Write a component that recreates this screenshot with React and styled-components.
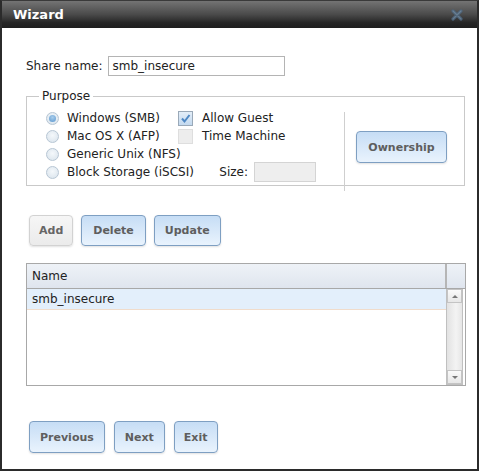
import React from 'react'
import styled, { createGlobalStyle } from 'styled-components'

const Global = createGlobalStyle`
  html, body { margin: 0; padding: 0; background: #fff; }
  body { font-family: "DejaVu Sans", "Liberation Sans", sans-serif; font-size: 12px; color: #222; }
`

const Window = styled.div`
  width: 479px;
  height: 471px;
  box-sizing: border-box;
  border: 2px solid #2b2b2b;
  border-top: 1px solid #3a3a3a;
  background: #fff;
  display: flex;
  flex-direction: column;
`

const TitleBar = styled.div`
  height: 27px;
  flex: none;
  display: flex;
  align-items: center;
  justify-content: space-between;
  padding: 0 14px 0 11px;
  background: linear-gradient(to bottom, #747474 0%, #4a4a4a 50%, #262626 80%, #1e1e1e 100%);
  color: #fff;
  font-weight: bold;
  font-size: 13px;
`

const Close = styled.div`
  width: 12px;
  height: 12px;
  display: flex;
  opacity: 0.8;
`

const Body = styled.div`
  flex: 1;
  padding: 28px 12px 0 24px;
  display: flex;
  flex-direction: column;
`

const ShareRow = styled.div`
  display: flex;
  align-items: center;
  gap: 5px;
`

const TextInput = styled.div`
  box-sizing: border-box;
  width: ${p => p.w}px;
  height: 20px;
  border: 1px solid ${p => (p.disabled ? '#d4d4d4' : '#b4b4b4')};
  background: ${p => (p.disabled ? '#eeeeee' : '#fff')};
  padding: 0 4px;
  display: flex;
  align-items: center;
`

const Fieldset = styled.fieldset`
  margin: 13px 0 0 0;
  padding: 2px 0 0 19px;
  width: 439px;
  box-sizing: border-box;
  height: 97px;
  border: 1px solid #c9c9c9;
  display: flex;
  legend {
    padding: 0 3px;
    margin-left: -7px;
    line-height: 14px;
  }
`

const Options = styled.div`
  display: grid;
  grid-template-columns: 132px 138px;
  grid-auto-rows: 18px;
  align-items: center;
  padding-top: 4px;
  & > :nth-child(n + 7) { height: 22px; }
`

const Radio = styled.label`
  display: flex;
  align-items: center;
  gap: 8px;
  white-space: nowrap;
  color: #222;
  span.dot {
    flex: none;
    box-sizing: border-box;
    width: 13px;
    height: 13px;
    border-radius: 50%;
    border: 1px solid #b7c6d4;
    background: radial-gradient(circle at 50% 40%, #f4f8fb, #d8e2eb);
    display: flex;
    align-items: center;
    justify-content: center;
  }
  span.dot::after {
    content: '';
    display: ${p => (p.checked ? 'block' : 'none')};
    width: 7px;
    height: 7px;
    border-radius: 50%;
    background: radial-gradient(circle at 50% 35%, #a9cdeb, #5a97cf);
  }
`

const Check = styled.label`
  display: flex;
  align-items: center;
  gap: 9px;
  white-space: nowrap;
  span.box {
    flex: none;
    box-sizing: border-box;
    width: 15px;
    height: 15px;
    border: 1px solid ${p => (p.checked ? '#9aa9b8' : '#dedede')};
    background: ${p => (p.checked ? 'linear-gradient(#e4eef8, #c3d9ef)' : '#ededed')};
    display: flex;
    align-items: center;
    justify-content: center;
  }
`

const SizeRow = styled.div`
  display: flex;
  align-items: center;
  justify-content: flex-end;
  gap: 6px;
`

const Separator = styled.div`
  width: 1px;
  background: #cfcfcf;
  margin: 7px 0 0 28px;
  height: 79px;
`

const Side = styled.div`
  flex: 1;
  display: flex;
  align-items: center;
  justify-content: center;
  padding: 0 6px 2px 0;
`

const Button = styled.div`
  box-sizing: border-box;
  height: ${p => p.h || 31}px;
  padding: 0 ${p => p.px || 9}px;
  display: inline-flex;
  align-items: center;
  justify-content: center;
  border-radius: 4px;
  font-weight: bold;
  font-size: 11px;
  color: ${p => (p.disabled ? '#666' : '#5e5e5e')};
  border: 1px solid ${p => (p.disabled ? '#d2d2d2' : '#7e9fc2')};
  background: ${p =>
    p.disabled
      ? 'linear-gradient(to bottom, #f6f6f6, #ebebeb)'
      : 'linear-gradient(to bottom, #c6ddf5, #e9f3fd)'};
  box-shadow: 0 1px 2px rgba(0, 0, 0, 0.12);
`

const ButtonRow = styled.div`
  display: flex;
  gap: ${p => p.gap || 8}px;
  margin: ${p => p.m};
`

const Table = styled.div`
  box-sizing: border-box;
  width: 440px;
  height: 123px;
  margin-top: 17px;
  border: 1px solid #a8a8a8;
  display: flex;
  flex-direction: column;
`

const Header = styled.div`
  height: 24px;
  flex: none;
  display: flex;
  background: linear-gradient(to bottom, #eef2f7, #dfe5ee);
  border-bottom: 1px solid #a8a8a8;
  div {
    box-sizing: border-box;
    width: 420px;
    border-right: 2px solid #b5b5b5;
    padding-left: 5px;
    display: flex;
    align-items: center;
  }
`

const Content = styled.div`
  flex: 1;
  display: flex;
`

const Rows = styled.div`
  flex: 1;
`

const Row = styled.div`
  height: 20px;
  padding-left: 5px;
  display: flex;
  align-items: center;
  background: ${p => (p.selected ? '#e3effb' : '#fff')};
  border-bottom: 1px solid ${p => (p.selected ? '#f0dccb' : 'transparent')};
`

const Scrollbar = styled.div`
  width: 15px;
  margin-right: 2px;
  display: flex;
  flex-direction: column;
  border: 1px solid #c0c0c0;
  border-top: none;
  background: linear-gradient(to right, #e2e2e2, #f3f3f3 60%, #e6e6e6);
`

const Arrow = styled.div`
  height: 14px;
  flex: none;
  box-sizing: border-box;
  border: 1px solid #c4c4c4;
  background: linear-gradient(#fafafa, #e7e7e7);
  display: flex;
  align-items: center;
  justify-content: center;
  &::after {
    content: '';
    border-left: 3px solid transparent;
    border-right: 3px solid transparent;
    ${p => (p.down ? 'border-top: 3px solid #777;' : 'border-bottom: 3px solid #777;')}
  }
`

const Track = styled.div`
  flex: 1;
`

function App() {
  return (
    <>
      <Global />
      <Window>
        <TitleBar>
          <span>Wizard</span>
          <Close>
            <svg width="12" height="12" viewBox="0 0 12 12">
              <path d="M2 2 L10 10 M10 2 L2 10" stroke="#4d6780" strokeWidth="3.2" strokeLinecap="round" />
              <path d="M2 2 L10 10 M10 2 L2 10" stroke="#6f8aa3" strokeWidth="1.2" strokeLinecap="round" />
            </svg>
          </Close>
        </TitleBar>
        <Body>
          <ShareRow>
            <span>Share name:</span>
            <TextInput w={177}>smb_insecure</TextInput>
          </ShareRow>
          <Fieldset>
            <legend>Purpose</legend>
            <Options>
              <Radio checked><span className="dot" />Windows (SMB)</Radio>
              <Check checked>
                <span className="box">
                  <svg width="11" height="11" viewBox="0 0 11 11">
                    <path d="M2 5.5 L4.5 8.5 L9.5 2" fill="none" stroke="#4f88c4" strokeWidth="2" />
                  </svg>
                </span>
                Allow Guest
              </Check>
              <Radio><span className="dot" />Mac OS X (AFP)</Radio>
              <Check><span className="box" />Time Machine</Check>
              <Radio><span className="dot" />Generic Unix (NFS)</Radio>
              <div />
              <Radio><span className="dot" />Block Storage (iSCSI)</Radio>
              <SizeRow>
                <span>Size:</span>
                <TextInput w={62} disabled />
              </SizeRow>
            </Options>
            <Separator />
            <Side>
              <Button h={32} px={11}>Ownership</Button>
            </Side>
          </Fieldset>
          <ButtonRow gap={8} m="29px 0 0 3px">
            <Button disabled>Add</Button>
            <Button px={11}>Delete</Button>
            <Button px={10}>Update</Button>
          </ButtonRow>
          <Table>
            <Header><div>Name</div></Header>
            <Content>
              <Rows>
                <Row selected>smb_insecure</Row>
              </Rows>
              <Scrollbar>
                <Arrow />
                <Track />
                <Arrow down />
              </Scrollbar>
            </Content>
          </Table>
          <ButtonRow gap={9} m="35px 0 0 3px">
            <Button h={32} px={10}>Previous</Button>
            <Button h={32} px={10}>Next</Button>
            <Button h={32} px={9}>Exit</Button>
          </ButtonRow>
        </Body>
      </Window>
    </>
  )
}

export default App
